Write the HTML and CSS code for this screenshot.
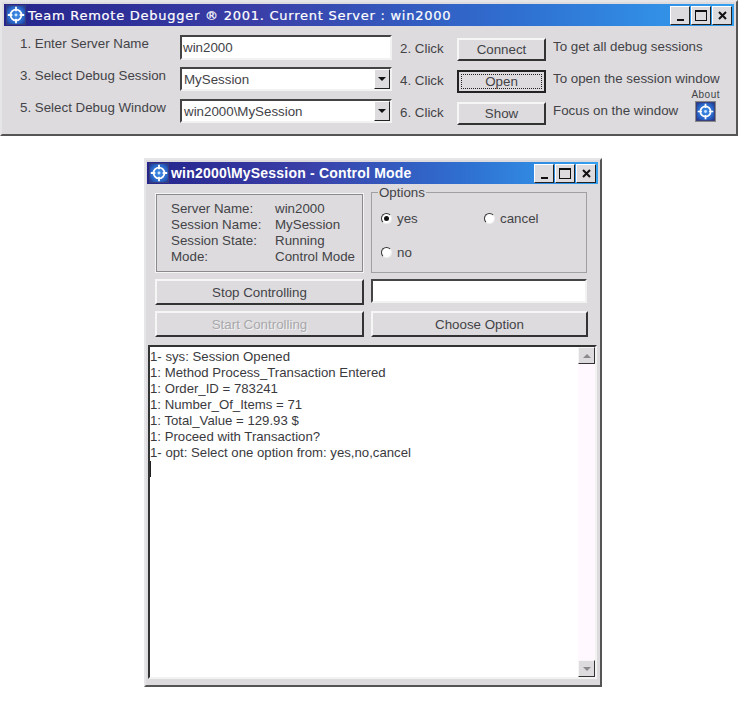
FILE: index.html
```html
<!DOCTYPE html>
<html lang="en">
<head>
<meta charset="utf-8">
<title>Team Remote Debugger</title>
<link rel="stylesheet" href="styles.css">
</head>
<body>
<svg class="defs" width="0" height="0" aria-hidden="true">
  <defs>
    <radialGradient id="glow" cx="50%" cy="50%" r="68%">
      <stop offset="0" stop-color="#3f8fe8"/>
      <stop offset="0.6" stop-color="#2a66c8"/>
      <stop offset="1" stop-color="#1c2a80"/>
    </radialGradient>
    <symbol id="target" viewBox="0 0 22 22">
      <rect width="22" height="22" fill="url(#glow)"/>
      <rect x="0.5" y="0.5" width="21" height="21" fill="none" stroke="#3c3f78"/>
      <circle cx="11" cy="11" r="6" fill="none" stroke="#fff" stroke-width="2"/>
      <path d="M11 2v5M11 15v5M2 11h5M15 11h5" stroke="#fff" stroke-width="2"/>
      <circle cx="11" cy="11" r="1.6" fill="#cfe6ff"/>
    </symbol>
  </defs>
</svg>

<main class="page">
  <section class="window window-main">
    <header class="titlebar">
      <svg class="title-icon"><use href="#target"/></svg>
      <span class="title-text title-main">Team Remote Debugger ® 2001. Current Server : win2000</span>
      <div class="title-btns">
        <span class="tbtn"><span class="g-min"></span></span>
        <span class="tbtn"><span class="g-max"></span></span>
        <span class="tbtn"><svg class="g-close" viewBox="0 0 9 9"><path d="M1 1l7 7M8 1l-7 7"/></svg></span>
      </div>
    </header>
    <div class="steps">
      <span class="lbl lbl-a">1. Enter Server Name</span>
      <div class="field field-a">win2000</div>
      <span class="lbl lbl-c">2. Click</span>
      <div class="btn step-btn step-b1">Connect</div>
      <span class="lbl lbl-b">To get all debug sessions</span>

      <span class="lbl lbl-a">3. Select Debug Session</span>
      <div class="field field-b"><span class="val">MySession</span><span class="drop"><i></i></span></div>
      <span class="lbl lbl-c">4. Click</span>
      <div class="btn step-btn focused"><span class="focus-ring">Open</span></div>
      <span class="lbl lbl-b">To open the session window</span>

      <span class="lbl lbl-a">5. Select Debug Window</span>
      <div class="field field-b"><span class="val">win2000\MySession</span><span class="drop"><i></i></span></div>
      <span class="lbl lbl-c">6. Click</span>
      <div class="btn step-btn">Show</div>
      <div class="last-hint">
        <span class="lbl lbl-b">Focus on the window</span>
        <div class="about">
          <span class="about-text">About</span>
          <svg class="about-icon"><use href="#target"/></svg>
        </div>
      </div>
    </div>
  </section>

  <section class="window window-session">
    <header class="titlebar">
      <svg class="title-icon"><use href="#target"/></svg>
      <span class="title-text title-sub">win2000\MySession - Control Mode</span>
      <div class="title-btns">
        <span class="tbtn"><span class="g-min"></span></span>
        <span class="tbtn"><span class="g-max"></span></span>
        <span class="tbtn"><svg class="g-close" viewBox="0 0 9 9"><path d="M1 1l7 7M8 1l-7 7"/></svg></span>
      </div>
    </header>
    <div class="controls">
      <dl class="info">
        <dt>Server Name:</dt><dd>win2000</dd>
        <dt>Session Name:</dt><dd>MySession</dd>
        <dt>Session State:</dt><dd>Running</dd>
        <dt>Mode:</dt><dd>Control Mode</dd>
      </dl>
      <div class="options">
        <span class="legend">Options</span>
        <div class="radio radio-on"><span class="dot"></span>yes</div>
        <div class="radio"><span class="dot"></span>cancel</div>
        <div class="radio"><span class="dot"></span>no</div>
      </div>
      <div class="btn ctl-btn">Stop Controlling</div>
      <div class="field field-opt"></div>
      <div class="btn ctl-btn disabled">Start Controlling</div>
      <div class="btn ctl-btn">Choose Option</div>
    </div>
    <div class="log">
      <div class="log-text">
        <div>1- sys: Session Opened</div>
        <div>1: Method Process_Transaction Entered</div>
        <div>1: Order_ID = 783241</div>
        <div>1: Number_Of_Items = 71</div>
        <div>1: Total_Value = 129.93 $</div>
        <div>1: Proceed with Transaction?</div>
        <div>1- opt: Select one option from: yes,no,cancel</div>
        <div class="caret"></div>
      </div>
      <div class="scrollbar">
        <span class="sbtn"><i class="up"></i></span>
        <span class="sbtn"><i class="down"></i></span>
      </div>
    </div>
  </section>
</main>
</body>
</html>
```
FILE: styles.css
```css
* { box-sizing: border-box; }
html, body { margin: 0; padding: 0; background: #fff; }
body {
  font-family: "Liberation Sans", Arial, sans-serif;
  font-size: 13.33px;
  color: #434347;
}
.defs { position: absolute; }
.page { display: flex; flex-direction: column; align-items: flex-start; }

.window {
  background: #dddbde;
  border: 2px solid;
  border-color: #e6e5e7 #555 #555 #e6e5e7;
  padding: 2px 2px 0;
}
.window-main { width: 738px; height: 136px; }
.window-session { width: 458px; height: 529px; margin: 22px 0 0 144px; padding: 2px 2px 0 1px; }

.titlebar {
  display: flex;
  align-items: center;
  height: 22px;
  background: linear-gradient(90deg, #25258c 0%, #3a3fa8 35%, #2f6fd0 70%, #33a0f0 100%);
  color: #fff;
}
.title-icon { width: 20px; height: 20px; flex: none; margin-left: 2px; }
.title-text { font-weight: bold; white-space: nowrap; flex: 1; padding-left: 2px; }
.title-main { font-family: "DejaVu Sans", sans-serif; font-size: 13px; font-weight: normal; letter-spacing: 0.75px; -webkit-text-stroke: 0.2px #fff; }
.title-sub { font-family: "Liberation Sans", sans-serif; font-size: 14px; letter-spacing: 0.2px; }
.title-btns { display: flex; gap: 1px; padding-right: 2px; }
.tbtn {
  width: 20px; height: 19px;
  background: #dddbde;
  border: 1px solid;
  border-color: #fff #222 #222 #fff;
  display: flex; align-items: center; justify-content: center;
}
.g-min { width: 7px; height: 2px; background: #111; margin-top: 9px; }
.g-max { width: 12px; height: 11px; border: 1px solid #111; border-top-width: 2px; }
.g-close { width: 9px; height: 9px; }
.g-close path { stroke: #111; stroke-width: 2; fill: none; }

.lbl { white-space: nowrap; }
.steps {
  display: grid;
  grid-template-columns: 160px 212px 65px 89px 1fr;
  grid-template-rows: 32px 32px 32px;
  padding: 9px 0 0 16px;
  align-items: start;
}
.lbl-a { margin-top: 1px; }
.lbl-c { margin: 6px 0 0 8px; }
.lbl-b { margin: 4px 0 0 7px; display: block; }
.field {
  background: #fff;
  border: 2px solid;
  border-color: #444 #f2f2f2 #f2f2f2 #444;
  padding-left: 1px;
  display: flex;
  align-items: center;
}
.field-a { height: 25px; }
.field-b { height: 24px; justify-content: space-between; }
.val { padding-left: 1px; }
.drop {
  width: 16px; height: 20px;
  background: #dddbde;
  border: 1px solid;
  border-color: #fff #222 #222 #fff;
  display: flex; align-items: center; justify-content: center;
}
.drop i { border: 4px solid transparent; border-top-color: #111; border-bottom-width: 0; }

.btn {
  background: #dddbde;
  border: 2px solid;
  border-color: #f6f6f6 #333 #333 #f6f6f6;
  display: flex; align-items: center; justify-content: center;
  white-space: nowrap;
}
.step-btn { width: 89px; height: 23px; margin-top: 3px; }
.focused { outline: 1px solid #222; outline-offset: -1px; border-color: #222; }
.focus-ring {
  width: 81px; height: 15px;
  border: 1px dotted #222;
  display: flex; align-items: center; justify-content: center;
}
.last-hint { display: flex; }
.about {
  display: flex; flex-direction: column; align-items: center;
  margin: -10px 0 0 13px;
  width: 29px;
}
.about-text { font-size: 10px; line-height: 12px; letter-spacing: 0.5px; }
.about-icon { width: 21px; height: 21px; border: 1px solid #888; }

.controls {
  display: grid;
  grid-template-columns: 209px 217px;
  grid-template-rows: 81px 26px 26px;
  column-gap: 7px;
  row-gap: 6px;
  padding: 8px 0 0 8px;
}
.info {
  margin: 1px 0 0;
  border: 1px solid #f4f4f4;
  outline: 1px solid #8a8a8d;
  outline-offset: -2px;
  display: grid;
  grid-template-columns: 104px 1fr;
  grid-auto-rows: 16px;
  align-content: center;
  padding-left: 15px;
}
.info dd { margin: 0; white-space: nowrap; }
.info dt { white-space: nowrap; }
.options {
  position: relative;
  border: 1px solid #a0a0a3;
  display: grid;
  grid-template-columns: 103px 1fr;
  grid-auto-rows: 34px;
  padding: 8px 0 0 9px;
  margin-right: 1px;
}
.legend { position: absolute; top: -8px; left: 6px; background: #dddbde; padding: 0 1px; line-height: 15px; }
.radio { display: flex; align-items: center; height: 34px; }
.dot {
  width: 11px; height: 11px;
  border-radius: 50%;
  background: #fff;
  border: 1px solid;
  border-color: #333 #eee #eee #333;
  margin-right: 5px;
  display: flex; align-items: center; justify-content: center;
}
.radio-on .dot::after { content: ""; width: 5px; height: 5px; border-radius: 50%; background: #111; }
.field-opt { height: 24px; padding: 0; margin-right: 1px; }
.ctl-btn { height: 26px; }
.disabled { color: #a8a8ab; text-shadow: 1px 1px 0 #f2f2f2; }

.log {
  margin-top: 8px;
  margin-left: 1px;
  width: 449px;
  height: 334px;
  background: #fff;
  border: 2px solid;
  border-color: #333 #f2f2f2 #f2f2f2 #333;
  display: flex;
}
.log-text { flex: 1; padding-top: 2px; line-height: 16px; color: #3a3a3e; font-size: 13.2px; }
.log-text div { white-space: nowrap; }
.log-text .caret { width: 1px; height: 16px; background: #222; }
.scrollbar {
  width: 17px;
  display: flex; flex-direction: column; justify-content: space-between;
  background: #fff9ff;
}
.sbtn {
  width: 17px; height: 17px;
  background: #dddbde;
  border: 1px solid;
  border-color: #f6f6f6 #333 #333 #f6f6f6;
  display: flex; align-items: center; justify-content: center;
}
.sbtn i { border: 4px solid transparent; }
.sbtn .up { border-bottom-color: #8a8a8d; border-top-width: 0; }
.sbtn .down { border-top-color: #8a8a8d; border-bottom-width: 0; }
```
